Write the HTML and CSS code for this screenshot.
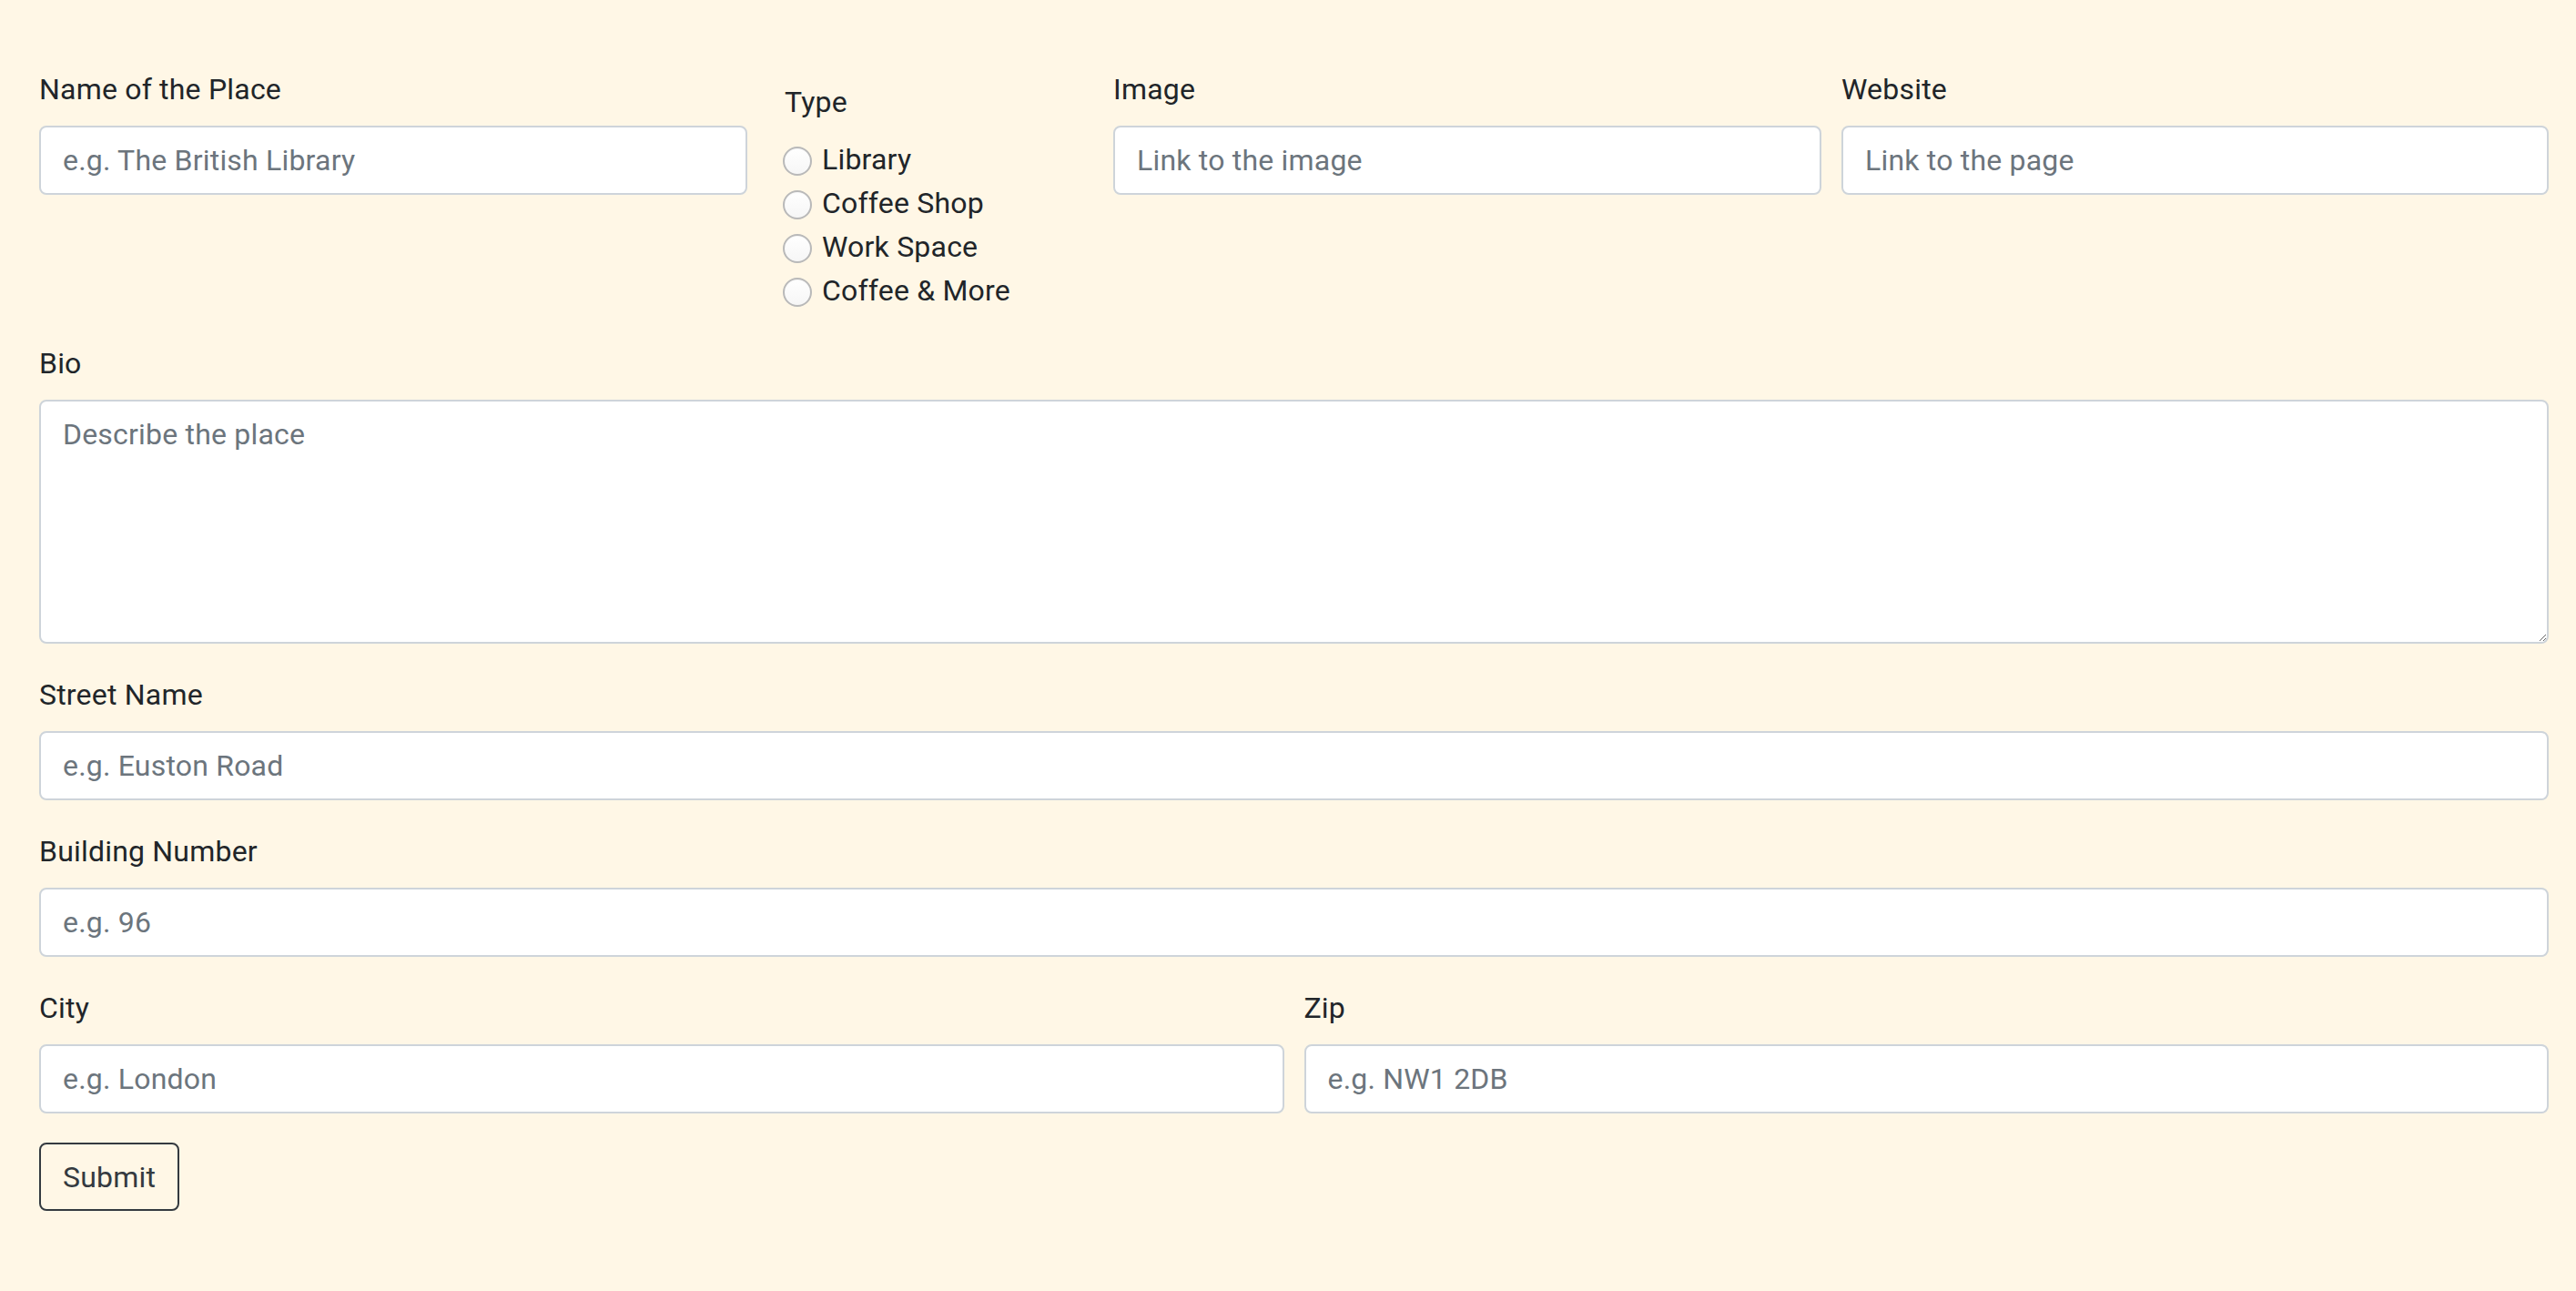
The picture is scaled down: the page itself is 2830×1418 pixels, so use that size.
FILE: index.html
```html
<!DOCTYPE html>
<html lang="en">
<head>
<meta charset="utf-8">
<title>Add a Place</title>
<link rel="stylesheet" href="styles.css">
</head>
<body>
<form class="place-form">
  <div class="top-row">
    <div class="form-group">
      <label class="form-label" for="name">Name of the Place</label>
      <input class="form-control" id="name" type="text" placeholder="e.g. The British Library">
    </div>
    <fieldset class="type-group">
      <legend class="type-legend">Type</legend>
      <label class="radio-row"><input class="radio" type="radio" name="type"><span>Library</span></label>
      <label class="radio-row"><input class="radio" type="radio" name="type"><span>Coffee Shop</span></label>
      <label class="radio-row"><input class="radio" type="radio" name="type"><span>Work Space</span></label>
      <label class="radio-row"><input class="radio" type="radio" name="type"><span>Coffee &amp; More</span></label>
    </fieldset>
    <div class="form-group">
      <label class="form-label" for="image">Image</label>
      <input class="form-control" id="image" type="text" placeholder="Link to the image">
    </div>
    <div class="form-group">
      <label class="form-label" for="website">Website</label>
      <input class="form-control" id="website" type="text" placeholder="Link to the page">
    </div>
  </div>
  <div class="form-group spaced">
    <label class="form-label" for="bio">Bio</label>
    <textarea class="form-control textarea" id="bio" placeholder="Describe the place"></textarea>
  </div>
  <div class="form-group spaced">
    <label class="form-label" for="street">Street Name</label>
    <input class="form-control" id="street" type="text" placeholder="e.g. Euston Road">
  </div>
  <div class="form-group spaced">
    <label class="form-label" for="number">Building Number</label>
    <input class="form-control" id="number" type="text" placeholder="e.g. 96">
  </div>
  <div class="two-col spaced">
    <div class="form-group">
      <label class="form-label" for="city">City</label>
      <input class="form-control" id="city" type="text" placeholder="e.g. London">
    </div>
    <div class="form-group">
      <label class="form-label" for="zip">Zip</label>
      <input class="form-control" id="zip" type="text" placeholder="e.g. NW1 2DB">
    </div>
  </div>
  <button class="btn-submit" type="submit">Submit</button>
</form>
</body>
</html>
```

FILE: styles.css
```css
html, body {
  margin: 0;
  background: #fff7e6;
}
body {
  padding: 74px 30px 60px 43px;
  font-family: Roboto, "Liberation Sans", Arial, sans-serif;
  font-size: 32px;
  line-height: 48px;
  letter-spacing: 0.2px;
  color: #212529;
}
.place-form {
  display: flex;
  flex-direction: column;
}
.top-row {
  display: grid;
  grid-template-columns: 778px 358px 778px 777px;
  column-gap: 22px;
  align-items: start;
  margin-bottom: 32px;
}
.form-group {
  display: flex;
  flex-direction: column;
  min-width: 0;
}
.spaced {
  margin-bottom: 32px;
}
.form-label {
  display: block;
  margin-bottom: 16px;
  font-size: 32px;
  line-height: 48px;
}
.form-control {
  box-sizing: border-box;
  width: 100%;
  height: 76px;
  margin: 0;
  padding: 12px 24px;
  border: 2px solid #ced4da;
  border-radius: 8px;
  background: #fff;
  font-family: inherit;
  font-size: 32px;
  line-height: 48px;
  letter-spacing: 0.2px;
  color: #495057;
  outline: none;
}
.form-control::placeholder {
  color: #6c757d;
  opacity: 1;
}
.textarea {
  height: 268px;
  resize: vertical;
  display: block;
}
.type-group {
  margin: 0;
  padding: 0 0 0 17px;
  border: 0;
  min-width: 0;
}
.type-legend {
  display: block;
  float: left;
  width: 100%;
  padding: 14px 0 14px 2px;
  margin: 0 0 1px;
  font-size: 32px;
  line-height: 48px;
}
.radio-row {
  clear: left;
  display: flex;
  align-items: center;
  height: 48px;
  font-size: 32px;
  line-height: 48px;
}
.radio {
  appearance: none;
  -webkit-appearance: none;
  box-sizing: border-box;
  width: 32px;
  height: 32px;
  margin: 4px 11px 0 0;
  border-radius: 50%;
  border: 2px solid #b9b9b9;
  background: linear-gradient(#ffffff, #f6f6f6);
  box-shadow: inset 0 1px 1px rgba(0, 0, 0, 0.04);
  flex: none;
}
.two-col {
  display: grid;
  grid-template-columns: 1fr 1fr;
  column-gap: 22px;
}
.btn-submit {
  align-self: flex-start;
  box-sizing: border-box;
  height: 75px;
  margin: 0;
  padding: 12px 24px;
  border: 2px solid #343a40;
  border-radius: 8px;
  background: transparent;
  color: #343a40;
  font-family: inherit;
  font-size: 32px;
  line-height: 48px;
  letter-spacing: 0.2px;
  cursor: pointer;
}
```
